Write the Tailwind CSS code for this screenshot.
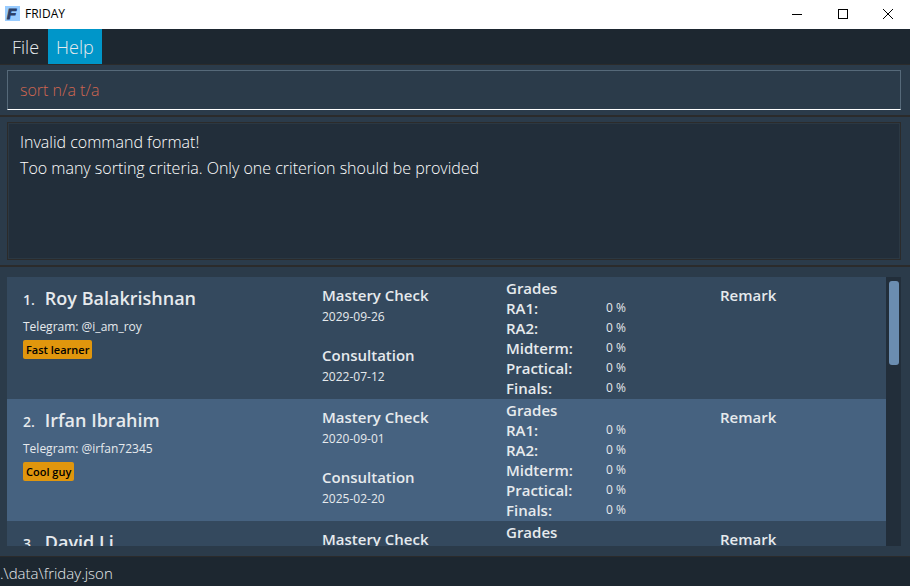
<!DOCTYPE html>
<html lang="en">
<head>
<meta charset="utf-8">
<meta name="viewport" content="width=device-width, initial-scale=1">
<title>FRIDAY</title>
<script src="https://cdn.jsdelivr.net/npm/@tailwindcss/browser@4"></script>
</head>
<body class="flex h-screen flex-col overflow-hidden bg-[#2b3b4a] font-['Open_Sans','Noto_Sans',sans-serif] text-[#e6eaed]">
  <header class="flex h-[29px] shrink-0 items-center bg-white pb-[2px] text-black">
    <svg class="ml-[5px] size-[15px]" viewBox="0 0 16 16" aria-hidden="true">
      <rect width="16" height="16" fill="#99ccff"/>
      <text x="2" y="14" font-family="Liberation Sans, sans-serif" font-size="16" font-weight="700" font-style="italic" fill="#2c3f66" stroke="#2c3f66" stroke-width="1">F</text>
    </svg>
    <h1 class="ml-[5px] text-[12px] leading-4">FRIDAY</h1>
    <div class="ml-auto flex h-full">
      <button class="flex w-[46px] items-center justify-center" aria-label="Minimize">
        <svg class="size-[10px]" viewBox="0 0 10 10" stroke="#000" shape-rendering="crispEdges"><path d="M0 5.5H10"/></svg>
      </button>
      <button class="flex w-[46px] items-center justify-center" aria-label="Maximize">
        <svg class="size-[10px]" viewBox="0 0 10 10" fill="none" stroke="#000" shape-rendering="crispEdges"><rect x=".5" y=".5" width="9" height="9"/></svg>
      </button>
      <button class="flex w-11 items-center justify-center" aria-label="Close">
        <svg class="size-[10px]" viewBox="0 0 10 10" fill="none" stroke="#000"><path d="M0 0L10 10M10 0L0 10"/></svg>
      </button>
    </div>
  </header>

  <nav class="flex h-9 shrink-0 border-b border-[#2b2b2b] bg-[#1d2730] text-[18px] leading-6 font-light">
    <button class="pr-[9px] pl-3">File</button>
    <button class="bg-[#0096c9] px-2">Help</button>
  </nav>

  <section class="border-b-2 border-[#2b2b2b] pt-[5px] pr-[9px] pb-[5px] pl-[7px]">
    <input aria-label="Command" value="sort n/a t/a" class="block h-10 w-full border border-[#566979] border-b-white bg-transparent px-3 text-[16px] font-light text-[#d06651] outline-none">
  </section>

  <section class="border-b-2 border-[#2b2b2b] pt-[5px] pr-[9px] pb-[5px] pl-[7px]">
    <output class="block h-[138px] border border-[#2b2b2b]">
      <span class="block h-full border border-[#2b3843] bg-[#222e3a] px-[11px] py-[5px] text-[16px] leading-[26px] font-light text-white">Invalid command format!<br>Too many sorting criteria. Only one criterion should be provided</span>
    </output>
  </section>

  <main class="flex min-h-0 flex-1 pt-[10px] pr-[9px] pb-[10px] pl-[7px]">
    <ol class="min-w-0 flex-1 overflow-hidden">
      <li class="grid h-[122px] grid-cols-[299fr_184fr_214fr_166fr] bg-[#34495e] pl-4">
        <div class="pt-[7px]">
          <h2 class="flex items-baseline gap-[10px]"><span class="text-[14px] font-semibold">1.</span><span class="text-[18px] leading-7 font-semibold">Roy Balakrishnan</span></h2>
          <p class="mt-[5px] text-[12px] leading-5">Telegram: @i_am_roy</p>
          <span class="mt-[3px] block h-[19px] w-fit rounded-xs bg-[#e0960d] px-[3px] text-[11px] leading-[19px] font-semibold text-black">Fast learner</span>
        </div>
        <dl class="pt-[7px] leading-5">
          <dt class="text-[15px] leading-[22px] font-semibold">Mastery Check</dt><dd class="text-[12px] leading-[22px]">2029-09-26</dd>
          <dt class="mt-4 text-[15px] leading-[22px] font-semibold">Consultation</dt><dd class="text-[12px] leading-[22px]">2022-07-12</dd>
        </dl>
        <table class="h-fit w-full table-fixed border-collapse text-left leading-5">
          <colgroup><col class="w-[100px]"><col></colgroup>
          <caption class="pt-px text-left text-[15px] font-semibold">Grades</caption>
          <tr><th class="text-[15px] font-semibold">RA1:</th><td class="h-5 text-[12px]">0 %</td></tr>
          <tr><th class="text-[15px] font-semibold">RA2:</th><td class="h-5 text-[12px]">0 %</td></tr>
          <tr><th class="text-[15px] font-semibold">Midterm:</th><td class="h-5 text-[12px]">0 %</td></tr>
          <tr><th class="text-[15px] font-semibold">Practical:</th><td class="h-5 text-[12px]">0 %</td></tr>
          <tr><th class="text-[15px] font-semibold">Finals:</th><td class="h-5 text-[12px]">0 %</td></tr>
        </table>
        <h3 class="pt-[7px] text-[15px] leading-[22px] font-semibold">Remark</h3>
      </li>
      <li class="grid h-[122px] grid-cols-[299fr_184fr_214fr_166fr] bg-[#466280] pl-4">
        <div class="pt-[7px]">
          <h2 class="flex items-baseline gap-[10px]"><span class="text-[14px] font-semibold">2.</span><span class="text-[18px] leading-7 font-semibold">Irfan Ibrahim</span></h2>
          <p class="mt-[5px] text-[12px] leading-5">Telegram: @irfan72345</p>
          <span class="mt-[3px] block h-[19px] w-fit rounded-xs bg-[#e0960d] px-[3px] text-[11px] leading-[19px] font-semibold text-black">Cool guy</span>
        </div>
        <dl class="pt-[7px] leading-5">
          <dt class="text-[15px] leading-[22px] font-semibold">Mastery Check</dt><dd class="text-[12px] leading-[22px]">2020-09-01</dd>
          <dt class="mt-4 text-[15px] leading-[22px] font-semibold">Consultation</dt><dd class="text-[12px] leading-[22px]">2025-02-20</dd>
        </dl>
        <table class="h-fit w-full table-fixed border-collapse text-left leading-5">
          <colgroup><col class="w-[100px]"><col></colgroup>
          <caption class="pt-px text-left text-[15px] font-semibold">Grades</caption>
          <tr><th class="text-[15px] font-semibold">RA1:</th><td class="h-5 text-[12px]">0 %</td></tr>
          <tr><th class="text-[15px] font-semibold">RA2:</th><td class="h-5 text-[12px]">0 %</td></tr>
          <tr><th class="text-[15px] font-semibold">Midterm:</th><td class="h-5 text-[12px]">0 %</td></tr>
          <tr><th class="text-[15px] font-semibold">Practical:</th><td class="h-5 text-[12px]">0 %</td></tr>
          <tr><th class="text-[15px] font-semibold">Finals:</th><td class="h-5 text-[12px]">0 %</td></tr>
        </table>
        <h3 class="pt-[7px] text-[15px] leading-[22px] font-semibold">Remark</h3>
      </li>
      <li class="grid h-[122px] grid-cols-[299fr_184fr_214fr_166fr] bg-[#34495e] pl-4">
        <div class="pt-[7px]">
          <h2 class="flex items-baseline gap-[10px]"><span class="text-[14px] font-semibold">3.</span><span class="text-[18px] leading-7 font-semibold">David Li</span></h2>
        </div>
        <h3 class="pt-[7px] text-[15px] leading-[22px] font-semibold">Mastery Check</h3>
        <h3 class="pt-px text-[15px] leading-5 font-semibold">Grades</h3>
        <h3 class="pt-[7px] text-[15px] leading-[22px] font-semibold">Remark</h3>
      </li>
    </ol>
    <div class="w-[15px] bg-[#222e3a] py-1 pr-[2px] pl-[3px]">
      <div class="h-[84px] rounded-[3px] bg-[#6b8db0]"></div>
    </div>
  </main>

  <footer class="h-[30px] shrink-0 border-t border-[#2b2b2b] bg-[#1d2730] pt-1 text-[15px] leading-6 font-light">.\data\friday.json</footer>
</body>
</html>
